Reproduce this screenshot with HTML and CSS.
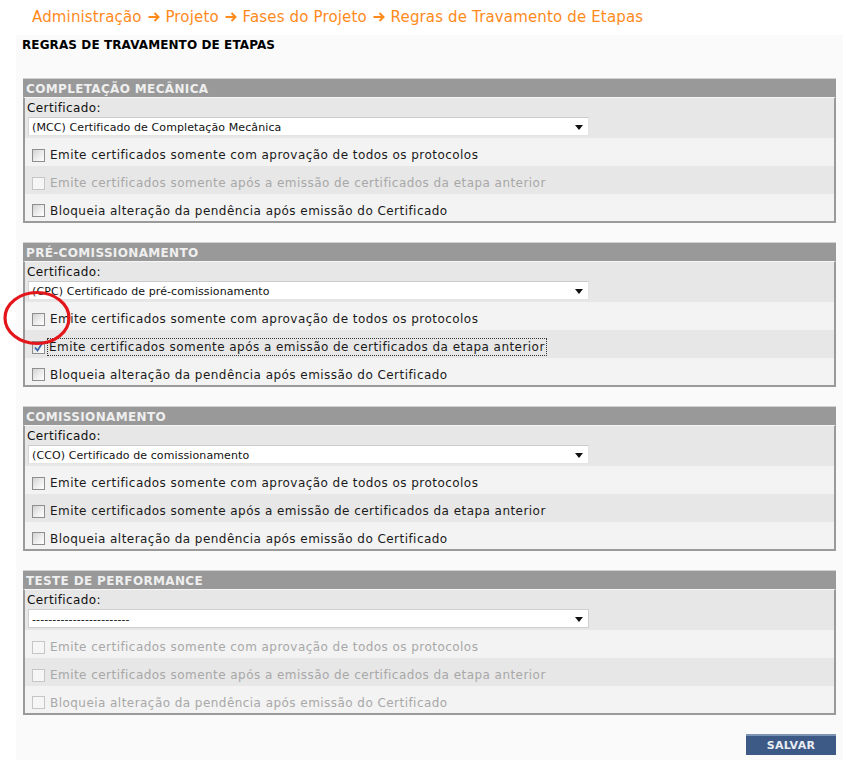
FILE: index.html
```html
<!DOCTYPE html>
<html lang="pt">
<head>
<meta charset="utf-8">
<title>Regras de Travamento de Etapas</title>
<link rel="stylesheet" href="styles.css">
</head>
<body>
<div class="crumb">Administração <svg class="arr" width="12" height="10" viewBox="0 0 12 10"><path d="M0.5 5 H10.5 M6.5 1 L10.5 5 L6.5 9" fill="none" stroke="#ff8a1c" stroke-width="2"/></svg> Projeto <svg class="arr" width="12" height="10" viewBox="0 0 12 10"><path d="M0.5 5 H10.5 M6.5 1 L10.5 5 L6.5 9" fill="none" stroke="#ff8a1c" stroke-width="2"/></svg> Fases do Projeto <svg class="arr" width="12" height="10" viewBox="0 0 12 10"><path d="M0.5 5 H10.5 M6.5 1 L10.5 5 L6.5 9" fill="none" stroke="#ff8a1c" stroke-width="2"/></svg> Regras de Travamento de Etapas</div>
<div class="content">
  <h1 class="title">REGRAS DE TRAVAMENTO DE ETAPAS</h1>

  <div class="panel">
    <div class="ph">COMPLETAÇÃO MECÂNICA</div>
    <div class="pb">
      <div class="cert">
        <div class="lbl">Certificado:</div>
        <div class="sel"><span>(MCC) Certificado de Completação Mecânica</span><i class="caret"></i></div>
      </div>
      <div class="row r1"><span class="cb"></span><span class="txt">Emite certificados somente com aprovação de todos os protocolos</span></div>
      <div class="row r2 dis"><span class="cb"></span><span class="txt">Emite certificados somente após a emissão de certificados da etapa anterior</span></div>
      <div class="row r3"><span class="cb"></span><span class="txt">Bloqueia alteração da pendência após emissão do Certificado</span></div>
    </div>
  </div>

  <div class="panel">
    <div class="ph">PRÉ-COMISSIONAMENTO</div>
    <div class="pb">
      <div class="cert">
        <div class="lbl">Certificado:</div>
        <div class="sel"><span>(CPC) Certificado de pré-comissionamento</span><i class="caret"></i></div>
      </div>
      <div class="row r1"><span class="cb"></span><span class="txt">Emite certificados somente com aprovação de todos os protocolos</span></div>
      <div class="row r2"><span class="cb checked"><svg viewBox="0 0 13 13" width="13" height="13"><path d="M3 6.5 L5.5 9.5 L10 2.5" fill="none" stroke="#3b64a8" stroke-width="1.8"/></svg></span><span class="txt focus">Emite certificados somente após a emissão de certificados da etapa anterior</span></div>
      <div class="row r3"><span class="cb"></span><span class="txt">Bloqueia alteração da pendência após emissão do Certificado</span></div>
    </div>
  </div>

  <div class="panel">
    <div class="ph">COMISSIONAMENTO</div>
    <div class="pb">
      <div class="cert">
        <div class="lbl">Certificado:</div>
        <div class="sel"><span>(CCO) Certificado de comissionamento</span><i class="caret"></i></div>
      </div>
      <div class="row r1"><span class="cb"></span><span class="txt">Emite certificados somente com aprovação de todos os protocolos</span></div>
      <div class="row r2"><span class="cb"></span><span class="txt">Emite certificados somente após a emissão de certificados da etapa anterior</span></div>
      <div class="row r3"><span class="cb"></span><span class="txt">Bloqueia alteração da pendência após emissão do Certificado</span></div>
    </div>
  </div>

  <div class="panel">
    <div class="ph">TESTE DE PERFORMANCE</div>
    <div class="pb">
      <div class="cert">
        <div class="lbl">Certificado:</div>
        <div class="sel bordered"><span>------------------------</span><i class="caret"></i></div>
      </div>
      <div class="row r1 dis"><span class="cb"></span><span class="txt">Emite certificados somente com aprovação de todos os protocolos</span></div>
      <div class="row r2 dis"><span class="cb"></span><span class="txt">Emite certificados somente após a emissão de certificados da etapa anterior</span></div>
      <div class="row r3 dis"><span class="cb"></span><span class="txt">Bloqueia alteração da pendência após emissão do Certificado</span></div>
    </div>
  </div>

  <div class="actions"><button class="btn">SALVAR</button></div>
</div>
<svg class="mark" width="76" height="60" viewBox="0 0 76 60"><ellipse cx="38" cy="30" rx="32" ry="25.5" fill="none" stroke="#e3161c" stroke-width="3.2"/></svg>
</body>
</html>
```
FILE: styles.css
```css
html, body {
  margin: 0;
  padding: 0;
  background: #ffffff;
  font-family: "DejaVu Sans", Verdana, sans-serif;
}
body {
  position: relative;
  height: 760px;
  overflow: hidden;
}
.crumb {
  height: 35px;
  box-sizing: border-box;
  padding: 7px 0 0 32px;
  font-size: 15px;
  line-height: 20px;
  letter-spacing: 0.15px;
  color: #ff8a1c;
}
.arr {
  vertical-align: 0px;
  margin: 0 1px;
}
.content {
  margin: 0 3px 0 16px;
  background: #fafafa;
  padding: 3px 0 0 6px;
  height: 725px;
  box-sizing: border-box;
}
.title {
  margin: 0 0 26px 0;
  font-size: 12px;
  line-height: 14px;
  font-weight: bold;
  letter-spacing: 0.1px;
  color: #000;
}
.panel {
  width: 813px;
  margin: 0 0 19px 1px;
  box-sizing: border-box;
  border-top: 1px solid #d2d2d2;
}
.ph {
  height: 18px;
  background: #999999;
  color: #efefef;
  font-size: 12px;
  font-weight: bold;
  line-height: 20px;
  letter-spacing: 0.35px;
  padding-left: 3px;
}
.pb {
  border: 2px solid #9a9a9a;
  border-top: 1px solid #f6f6f6;
  background: #f3f3f3;
}
.cert {
  height: 40px;
  background: #e7e7e7;
  padding: 3px 0 0 2px;
  box-sizing: border-box;
  font-size: 12px;
  letter-spacing: 0.4px;
  color: #111;
}
.lbl {
  line-height: 15px;
  height: 15px;
}
.sel {
  margin: 1px 0 0 1px;
  width: 561px;
  height: 19px;
  box-sizing: border-box;
  background: #fff;
  border: 1px solid #e4e4e4;
  border-top-color: #cbcbcb;
  border-left-color: #d6d6d6;
  display: flex;
  align-items: center;
  justify-content: space-between;
  padding: 1px 5px 0 3px;
  font-size: 11px;
  letter-spacing: 0.1px;
  color: #111;
}
.sel.bordered {
  border-color: #cfcfcf;
}
.caret {
  width: 0;
  height: 0;
  border-left: 4px solid transparent;
  border-right: 4px solid transparent;
  border-top: 5px solid #111;
  margin-top: 1px;
}
.row {
  display: flex;
  align-items: center;
  padding-left: 7px;
  padding-top: 6px;
  box-sizing: border-box;
  font-size: 12px;
  color: #1a1a1a;
}
.row.r1 { background: #f3f3f3; height: 28px; }
.row.r2 { background: #e7e7e7; height: 28px; }
.row.r3 { background: #f3f3f3; height: 27px; }
.cb {
  width: 13px;
  height: 13px;
  box-sizing: border-box;
  border: 1px solid #8e8e8e;
  background: linear-gradient(135deg, #d2d2d2 0%, #eeeeee 55%, #ffffff 100%);
  margin-right: 5px;
  flex: none;
  position: relative;
}
.cb svg {
  position: absolute;
  left: -1px;
  top: -1px;
}
.row.dis {
  color: #a8a8a8;
}
.row.dis .cb {
  border-color: #c6c6c6;
  background: #f6f6f6;
}
.txt {
  letter-spacing: 0.45px;
  line-height: 16px;
}
.txt.focus {
  outline: 1px dotted #333;
  outline-offset: 0;
  padding: 0 1px;
  margin-left: -2px;
}
.actions {
  display: flex;
  justify-content: flex-end;
  width: 813px;
  margin-left: 1px;
}
.btn {
  width: 90px;
  height: 21px;
  border: 0;
  border-top: 2px solid #7d93b4;
  background: #3d5a86;
  color: #e9edf3;
  font-family: "DejaVu Sans", Verdana, sans-serif;
  font-size: 11px;
  font-weight: bold;
  letter-spacing: 0.3px;
  padding: 0;
}
.mark {
  position: absolute;
  left: -1px;
  top: 288px;
}
```
